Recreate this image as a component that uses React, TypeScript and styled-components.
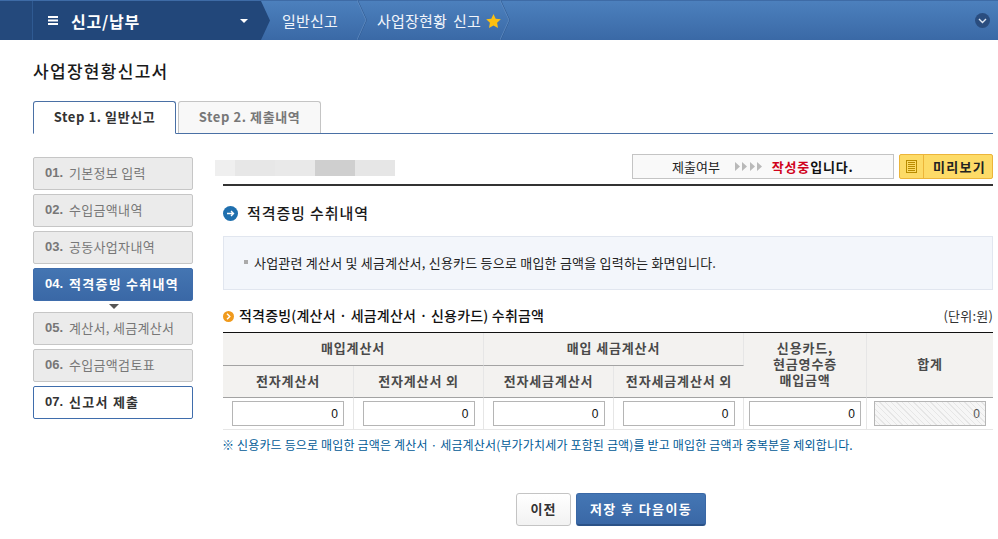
import React from 'react';
import styled, { createGlobalStyle } from 'styled-components';

const GlobalStyle = createGlobalStyle`
  html, body {
    margin: 0;
    padding: 0;
    background: #fff;
  }
  body {
    font-family: 'Noto Sans CJK KR', 'Noto Sans', sans-serif;
    font-size: 13px;
    color: #222;
  }
  * {
    box-sizing: border-box;
  }
`;

const Page = styled.div`
  width: 998px;
  height: 539px;
  overflow: hidden;
`;

/* top bar */
const TopBar = styled.div`
  height: 40px;
  display: flex;
  align-items: center;
  position: relative;
  background: linear-gradient(180deg, #4c80bd 0%, #3a69a6 100%);
  border-top: 1px solid #3e6ba6;
  color: #fff;
`;

const TopEdge = styled.div`
  width: 33px;
  align-self: stretch;
  background: #24497c;
  border-right: 1px solid #2f5a92;
`;

const MenuBlock = styled.div`
  width: 237px;
  align-self: stretch;
  display: flex;
  align-items: center;
  padding: 0 22px 0 15px;
  gap: 13px;
  background: #22477a;
  clip-path: polygon(0 0, 228px 0, 100% 50%, 228px 100%, 0 100%);
  font-size: 16px;
  font-weight: 700;
`;

const MenuTitle = styled.span`
  flex: 1;
  letter-spacing: 0.8px;
`;

const Crumb = styled.div<{ $width: number; $inset: number }>`
  width: ${(p) => p.$width}px;
  align-self: stretch;
  display: flex;
  align-items: center;
  gap: 5px;
  padding-left: ${(p) => p.$inset}px;
  font-size: 15px;
  letter-spacing: 0.2px;
  word-spacing: 2.5px;
  white-space: nowrap;
  color: #f1f5fb;

  svg {
    flex: none;
  }
`;

const CrumbChevron = styled.svg`
  width: 10px;
  height: 40px;
  margin-top: -1px;
  flex: none;
`;

const Collapse = styled.button`
  position: absolute;
  right: 8px;
  top: 12px;
  width: 15px;
  height: 15px;
  padding: 0;
  border: none;
  border-radius: 50%;
  background: #2a4d7f;
  display: flex;
  align-items: center;
  justify-content: center;
`;

/* page head and tabs */
const PageTitle = styled.h1`
  margin: 19px 0 0 33px;
  height: 24px;
  line-height: 24px;
  font-size: 17px;
  font-weight: 500;
  letter-spacing: 1.3px;
  color: #1a1a1a;
`;

const Tabs = styled.div`
  margin: 18px 5px 0 33px;
  height: 33px;
  display: flex;
  gap: 2px;
  border-bottom: 1px solid #4a70a5;
`;

const Tab = styled.div<{ $active?: boolean }>`
  width: 143px;
  height: ${(p) => (p.$active ? 33 : 32)}px;
  padding-bottom: 2px;
  display: flex;
  align-items: center;
  justify-content: center;
  font-size: 13px;
  font-weight: 700;
  letter-spacing: 0.6px;
  border: 1px solid ${(p) => (p.$active ? '#4a70a5' : '#c4c4c4')};
  border-bottom: ${(p) => (p.$active ? '1px solid #fff' : 'none')};
  border-radius: 3px 3px 0 0;
  background: ${(p) => (p.$active ? '#fff' : '#f8f8f8')};
  color: ${(p) => (p.$active ? '#333' : '#777')};
`;

const Body = styled.div`
  display: flex;
  margin: 20px 5px 0 33px;
`;

/* side steps */
const Steps = styled.nav`
  width: 160px;
  flex: none;
  margin-top: 3px;
  display: flex;
  flex-direction: column;
  gap: 4px;
`;

const Step = styled.div<{ $state?: 'active' | 'todo' }>`
  position: relative;
  height: 33px;
  display: flex;
  align-items: center;
  gap: 6px;
  padding: 0 0 2px 11px;
  border-radius: 2px;
  font-size: 13px;
  letter-spacing: ${(p) => (p.$state ? 1.25 : 0.3)}px;
  white-space: nowrap;
  border: 1px solid
    ${(p) => (p.$state === 'active' || p.$state === 'todo' ? '#3f6dac' : '#c6c6c6')};
  background: ${(p) =>
    p.$state === 'active'
      ? 'linear-gradient(180deg, #4475b2 0%, #3a68a6 100%)'
      : p.$state === 'todo'
        ? '#fff'
        : '#ebebeb'};
  color: ${(p) => (p.$state === 'active' ? '#fff' : p.$state === 'todo' ? '#333' : '#777')};
  font-weight: ${(p) => (p.$state ? 700 : 400)};
  margin-bottom: ${(p) => (p.$state === 'active' ? 7 : 0)}px;

  ${(p) =>
    p.$state === 'active' &&
    `
    &::after {
      content: '';
      position: absolute;
      left: 75px;
      bottom: -9px;
      border-left: 5px solid transparent;
      border-right: 5px solid transparent;
      border-top: 5px solid #555;
    }
  `}
`;

const StepNo = styled.b`
  font-family: 'Liberation Sans', sans-serif;
  font-size: 13px;
  font-weight: 700;
  letter-spacing: 0;
`;

/* main column */
const Main = styled.main`
  flex: 1;
  min-width: 0;
  padding-left: 30px;
`;

const StatusRow = styled.div`
  height: 32px;
  display: flex;
  align-items: flex-start;
  justify-content: space-between;
  border-bottom: 2px solid #333;
`;

const Masked = styled.div`
  width: 180px;
  height: 16px;
  margin: 6px 0 0 -8px;
  background: linear-gradient(
    90deg,
    #efefef 0 20px,
    #e7e7e7 20px 60px,
    #e9e9e9 60px 100px,
    #cfcfcf 100px 140px,
    #e6e6e6 140px 180px
  );
`;

const StatusActions = styled.div`
  display: flex;
  gap: 5px;
`;

const StatusBox = styled.div`
  width: 262px;
  height: 25px;
  display: flex;
  align-items: center;
  padding: 0 0 1px 39px;
  border: 1px solid #c4c4c4;
  background: #f9f9f9;
  color: #222;
`;

const StatusArrows = styled.svg`
  width: 27px;
  height: 9px;
  margin: 1px 10px 0 15px;
`;

const StatusText = styled.b`
  color: #111;
  letter-spacing: 0.8px;
`;

const StatusRed = styled.span`
  color: #d0021b;
`;

const PreviewButton = styled.button`
  width: 94px;
  height: 25px;
  padding: 0;
  display: flex;
  align-items: center;
  font: inherit;
  font-weight: 700;
  letter-spacing: 1.3px;
  color: #222;
  background: #fddb67;
  border: 1px solid #ecb53a;
  border-radius: 2px;
`;

const PreviewIcon = styled.span`
  width: 24px;
  height: 100%;
  display: flex;
  align-items: center;
  justify-content: center;
  border-right: 1px solid #ecb53a;
`;

const PreviewLabel = styled.span`
  flex: 1;
  padding-left: 3px;
  text-align: center;
`;

const SectionTitle = styled.h2`
  margin: 17px 0 0;
  height: 20px;
  padding-bottom: 2px;
  display: flex;
  align-items: center;
  gap: 9px;
  font-size: 15px;
  font-weight: 500;
  letter-spacing: 0.9px;
  color: #1a1a1a;

  svg {
    margin-top: 2px;
  }
`;

const InfoBox = styled.div`
  margin: 13px 0 0;
  height: 54px;
  display: flex;
  align-items: center;
  gap: 6px;
  padding: 0 0 2px 20px;
  background: #f3f6fb;
  border: 1px solid #e1e6ef;
  letter-spacing: 0.22px;
  color: #222;
`;

const Bullet = styled.i`
  width: 4px;
  height: 4px;
  background: #aaa;
`;

const TableHead = styled.div`
  margin: 17px 0 0;
  height: 18px;
  padding-bottom: 2px;
  display: flex;
  align-items: center;
`;

const TableTitle = styled.h3`
  flex: 1;
  margin: 0;
  display: flex;
  align-items: center;
  gap: 5px;
  font-size: 14px;
  font-weight: 500;
  letter-spacing: 0.2px;
  color: #111;

  svg {
    margin-top: 2px;
  }
`;

const Unit = styled.span`
  letter-spacing: 0.2px;
  color: #333;
`;

const AmountTable = styled.table`
  width: 770px;
  margin: 7px 0 0;
  border-collapse: separate;
  border-spacing: 0;
  table-layout: fixed;
  border-top: 1px solid #111;
`;

const Th = styled.th<{ $tall?: boolean }>`
  height: ${(p) => (p.$tall ? 33 : 32)}px;
  padding: 0 0 2px;
  background: #f3f2f0;
  font-weight: 700;
  font-size: 13px;
  line-height: 16px;
  letter-spacing: 0.85px;
  color: #4a4a4a;
  border-bottom: 1px solid #a3a3a3;
  border-right: 1px solid #e6e6e6;

  &:last-child {
    border-right: none;
  }
`;

const Td = styled.td`
  height: 32px;
  padding: 0;
  text-align: center;
  border-bottom: 1px solid #e6e6e6;
  border-right: 1px solid #e6e6e6;

  &:last-child {
    border-right: none;
  }
`;

const Amount = styled.input<{ $locked?: boolean }>`
  display: block;
  width: 112px;
  height: 25px;
  margin: 0 auto;
  padding: 0 5px;
  text-align: right;
  font-family: 'Liberation Sans', sans-serif;
  font-size: 12px;
  color: ${(p) => (p.$locked ? '#555' : '#111')};
  border: 1px solid #b5b5b5;
  outline: none;
  background: ${(p) =>
    p.$locked
      ? 'repeating-linear-gradient(45deg, #f6f6f6 0 3px, #e6e6e6 3px 4px)'
      : '#fff'};
`;

const Note = styled.p`
  margin: 7px 0 0 -1px;
  height: 16px;
  line-height: 16px;
  font-size: 12px;
  letter-spacing: 0.16px;
  white-space: nowrap;
  color: #005a96;
`;

const Actions = styled.div`
  margin-top: 40px;
  margin-left: 293px;
  display: flex;
  gap: 5px;
`;

const Button = styled.button<{ $primary?: boolean }>`
  height: 33px;
  width: ${(p) => (p.$primary ? 130 : 55)}px;
  padding: 0 0 2px;
  font: inherit;
  font-weight: 700;
  letter-spacing: ${(p) => (p.$primary ? 1.4 : 1)}px;
  border-radius: 3px;
  color: ${(p) => (p.$primary ? '#fff' : '#333')};
  background: ${(p) =>
    p.$primary ? 'linear-gradient(180deg, #4476b4 0%, #3a68a6 100%)' : 'linear-gradient(180deg, #fff 0%, #f2f2f2 100%)'};
  border: 1px solid ${(p) => (p.$primary ? '#3a68a6' : '#c4c4c4')};
  border-bottom: ${(p) => (p.$primary ? '2px solid #2b5287' : '1px solid #c4c4c4')};
`;

const Chevron = () => (
  <CrumbChevron viewBox="0 0 10 40">
    <path d="M0.5 0 L9.5 20 L0.5 40" fill="none" stroke="#2f5a92" strokeWidth="1" />
    <path d="M0 0 L9 20 L0 40" fill="none" stroke="#6f9bce" strokeWidth="0.6" />
  </CrumbChevron>
);

const stepItems: { no: string; label: string; state?: 'active' | 'todo' }[] = [
  { no: '01.', label: '기본정보 입력' },
  { no: '02.', label: '수입금액내역' },
  { no: '03.', label: '공동사업자내역' },
  { no: '04.', label: '적격증빙 수취내역', state: 'active' },
  { no: '05.', label: '계산서, 세금계산서' },
  { no: '06.', label: '수입금액검토표' },
  { no: '07.', label: '신고서 제출', state: 'todo' },
];

const columnWidths = [131, 130, 130, 130, 123, 126];

export default function App() {
  return (
    <Page>
      <GlobalStyle />
      <TopBar>
        <TopEdge />
        <MenuBlock>
          <svg width="10" height="9" viewBox="0 0 10 9">
            <path d="M0 0h10v2H0zM0 3.5h10v2H0zM0 7h10v2H0z" fill="#fff" />
          </svg>
          <MenuTitle>신고/납부</MenuTitle>
          <svg width="8" height="4" viewBox="0 0 8 4">
            <path d="M0 0h8L4 4z" fill="#fff" />
          </svg>
        </MenuBlock>
        <Crumb $width={87} $inset={12}>일반신고</Crumb>
        <Chevron />
        <Crumb $width={133} $inset={10}>
          사업장현황 신고
          <svg width="15" height="14" viewBox="0 0 24 23">
            <path
              d="M12 0l3.6 7.6 8.4 1.1-6.1 5.8 1.5 8.3L12 18.8 4.6 22.8l1.5-8.3L0 8.7l8.4-1.1z"
              fill="#fdc010"
            />
          </svg>
        </Crumb>
        <Chevron />
        <Collapse aria-label="접기">
          <svg width="9" height="6" viewBox="0 0 9 6">
            <path d="M1 1l3.5 3.5L8 1" fill="none" stroke="#dfe7f2" strokeWidth="1.4" />
          </svg>
        </Collapse>
      </TopBar>

      <PageTitle>사업장현황신고서</PageTitle>

      <Tabs>
        <Tab $active>Step 1. 일반신고</Tab>
        <Tab>Step 2. 제출내역</Tab>
      </Tabs>

      <Body>
        <Steps>
          {stepItems.map((item) => (
            <Step key={item.no} $state={item.state}>
              <StepNo>{item.no}</StepNo>
              {item.label}
            </Step>
          ))}
        </Steps>

        <Main>
          <StatusRow>
            <Masked />
            <StatusActions>
              <StatusBox>
                제출여부
                <StatusArrows viewBox="0 0 27 9">
                  <path d="M0 0l5 4.5L0 9zM7 0l5 4.5L7 9zM15 0l5 4.5L15 9zM22 0l5 4.5L22 9z" fill="#b9b9b9" />
                </StatusArrows>
                <StatusText>
                  <StatusRed>작성중</StatusRed>입니다.
                </StatusText>
              </StatusBox>
              <PreviewButton>
                <PreviewIcon>
                  <svg width="11" height="13" viewBox="0 0 11 13">
                    <rect x="0.5" y="0.5" width="10" height="12" fill="#fddb67" stroke="#b98c00" />
                    <path d="M2 2.5h7M2 4.5h7M2 6.5h7M2 8.5h7M2 10.5h7" stroke="#b98c00" strokeWidth="1" />
                  </svg>
                </PreviewIcon>
                <PreviewLabel>미리보기</PreviewLabel>
              </PreviewButton>
            </StatusActions>
          </StatusRow>

          <SectionTitle>
            <svg width="15" height="15" viewBox="0 0 15 15">
              <circle cx="7.5" cy="7.5" r="7.5" fill="#1f6fae" />
              <path d="M4 7.5h6M8 5l2.5 2.5L8 10" fill="none" stroke="#fff" strokeWidth="1.4" />
            </svg>
            적격증빙 수취내역
          </SectionTitle>

          <InfoBox>
            <Bullet />
            사업관련 계산서 및 세금계산서, 신용카드 등으로 매입한 금액을 입력하는 화면입니다.
          </InfoBox>

          <TableHead>
            <TableTitle>
              <svg width="11" height="11" viewBox="0 0 11 11">
                <circle cx="5.5" cy="5.5" r="5.5" fill="#f09a1c" />
                <path d="M4 2.8l2.8 2.7L4 8.2" fill="none" stroke="#fff" strokeWidth="1.4" />
              </svg>
              적격증빙(계산서 · 세금계산서 · 신용카드) 수취금액
            </TableTitle>
            <Unit>(단위:원)</Unit>
          </TableHead>

          <AmountTable>
            <colgroup>
              {columnWidths.map((w, i) => (
                <col key={i} width={w} />
              ))}
            </colgroup>
            <thead>
              <tr>
                <Th $tall colSpan={2}>매입계산서</Th>
                <Th $tall colSpan={2}>매입 세금계산서</Th>
                <Th rowSpan={2}>
                  신용카드,
                  <br />
                  현금영수증
                  <br />
                  매입금액
                </Th>
                <Th rowSpan={2}>합계</Th>
              </tr>
              <tr>
                <Th>전자계산서</Th>
                <Th>전자계산서 외</Th>
                <Th>전자세금계산서</Th>
                <Th>전자세금계산서 외</Th>
              </tr>
            </thead>
            <tbody>
              <tr>
                {columnWidths.map((_, i) => (
                  <Td key={i}>
                    <Amount value="0" readOnly $locked={i === 5} />
                  </Td>
                ))}
              </tr>
            </tbody>
          </AmountTable>

          <Note>※ 신용카드 등으로 매입한 금액은 계산서 · 세금계산서(부가가치세가 포함된 금액)를 받고 매입한 금액과 중복분을 제외합니다.</Note>

          <Actions>
            <Button>이전</Button>
            <Button $primary>저장 후 다음이동</Button>
          </Actions>
        </Main>
      </Body>
    </Page>
  );
}
